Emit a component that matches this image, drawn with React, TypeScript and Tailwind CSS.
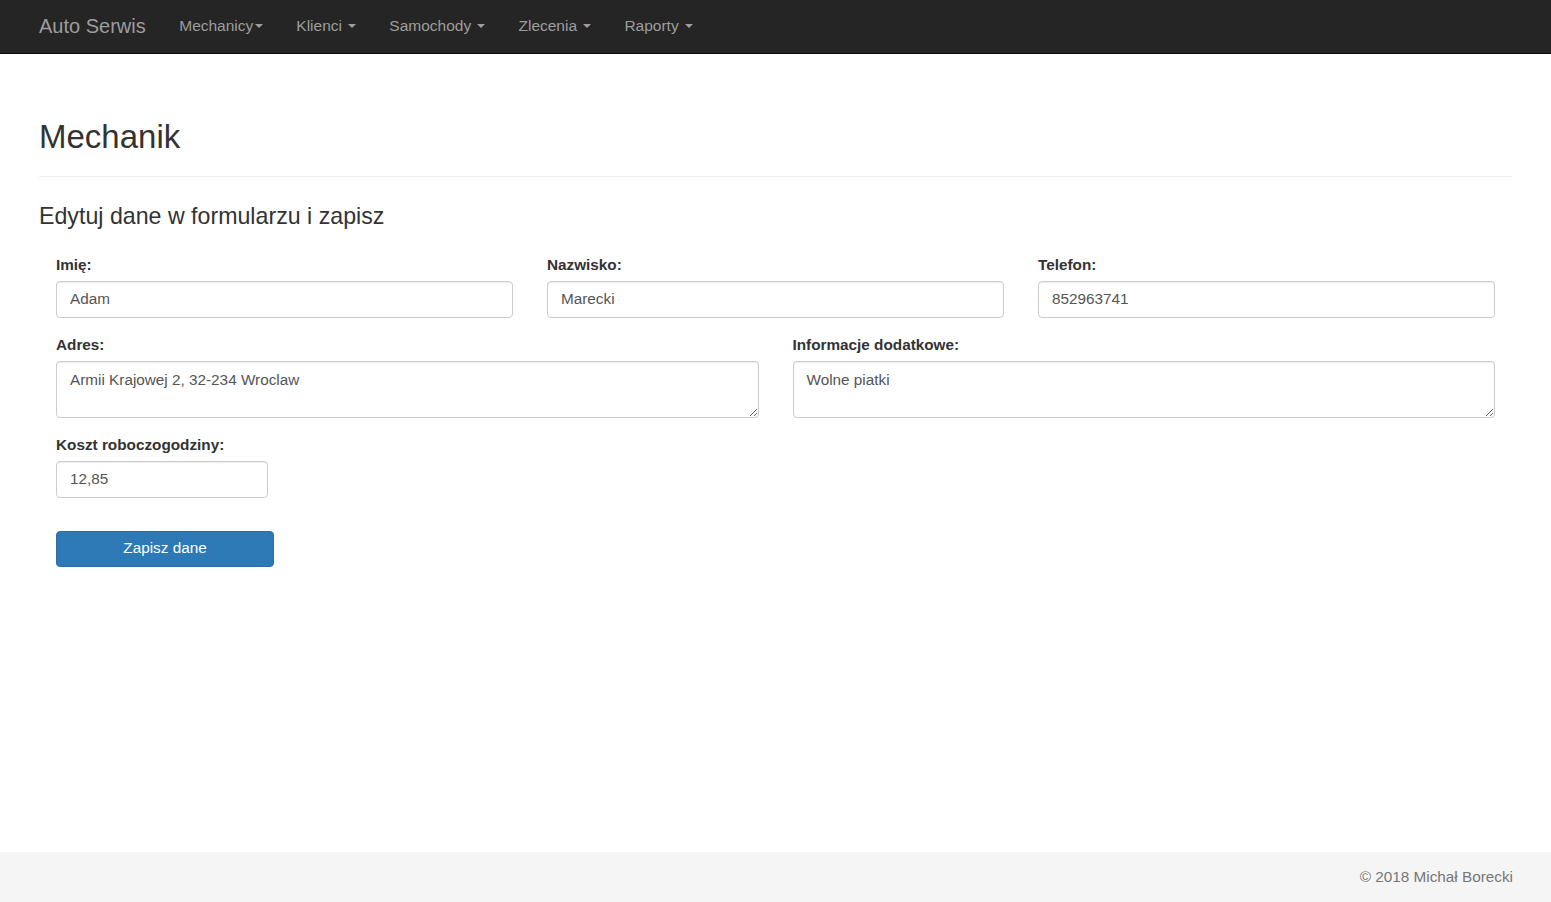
import React from 'react';

const navItems = [
    { label: 'Mechanicy', tight: true },
    { label: 'Klienci', tight: false },
    { label: 'Samochody', tight: false },
    { label: 'Zlecenia', tight: false },
    { label: 'Raporty', tight: false },
];

const Caret = () => (
    <span className="inline-block w-0 h-0 ml-[2px] align-middle border-t-[4px] border-t-[#9d9d9d] border-x-[4px] border-x-transparent" />
);

const Field = ({ label, children }: { label: string; children: React.ReactNode }) => (
    <div className="flex flex-col mb-[16px]">
        <label className="font-bold text-[#333] leading-[21px] mb-[6px]">{label}</label>
        {children}
    </div>
);

const inputCls =
    'h-[37px] w-full px-[13px] border border-[#ccc] rounded-[4px] bg-white text-[#555] text-[15.3px] outline-none shadow-[inset_0_1px_1px_rgba(0,0,0,0.075)]';

const areaCls =
    'block w-full h-[57px] px-[13px] pt-[7px] leading-[21px] border border-[#ccc] rounded-[4px] bg-white text-[#555] text-[15.3px] outline-none shadow-[inset_0_1px_1px_rgba(0,0,0,0.075)]';

const App: React.FC = () => {
    return (
        <div className="min-h-screen flex flex-col bg-white text-[15.3px] text-[#333] font-['Liberation_Sans',Arial,sans-serif]">
            {/* Navbar */}
            <nav className="h-[54px] bg-[#252525] border-b border-[#080808] flex items-center pl-[22px] pb-[2px]">
                <a className="px-[17px] text-[20px] text-[#9d9d9d] leading-none">Auto Serwis</a>
                {navItems.map((item) => (
                    <a key={item.label} className="px-[16.5px] text-[15.5px] text-[#9d9d9d] leading-none flex items-center">
                        {item.label}
                        {!item.tight && <span>&nbsp;</span>}
                        <Caret />
                    </a>
                ))}
            </nav>

            <main className="flex-1 px-[39px]">
                <h1 className="mt-[65px] text-[33px] leading-[1.1] text-[#333]">Mechanik</h1>
                <hr className="mt-[21px] border-t border-[#eee]" />
                <h3 className="mt-[27px] text-[23.2px] leading-[1.1] text-[#333]">Edytuj dane w formularzu i zapisz</h3>

                <form className="mt-[24px] px-[17px]">
                    <div className="grid grid-cols-3 gap-x-[34px]">
                        <Field label="Imię:">
                            <input className={inputCls} defaultValue="Adam" />
                        </Field>
                        <Field label="Nazwisko:">
                            <input className={inputCls} defaultValue="Marecki" />
                        </Field>
                        <Field label="Telefon:">
                            <input className={inputCls} defaultValue="852963741" />
                        </Field>
                    </div>

                    <div className="grid grid-cols-2 gap-x-[34px]">
                        <Field label="Adres:">
                            <textarea rows={2} className={areaCls} defaultValue="Armii Krajowej 2, 32-234 Wroclaw" />
                        </Field>
                        <Field label="Informacje dodatkowe:">
                            <textarea rows={2} className={areaCls} defaultValue="Wolne piatki" />
                        </Field>
                    </div>

                    <div className="w-[212px]">
                        <Field label="Koszt roboczogodziny:">
                            <input className={inputCls} defaultValue="12,85" />
                        </Field>
                    </div>

                    <button
                        type="button"
                        className="mt-[17px] w-[218px] h-[36px] bg-[#2c79b6] border border-[#2e6da4] rounded-[4px] text-white text-[15.3px]"
                    >
                        Zapisz dane
                    </button>
                </form>
            </main>

            {/* Footer */}
            <footer className="h-[50px] bg-[#f5f5f5] flex items-center justify-end pr-[38px] text-[#777] text-[15.3px]">
                © 2018 Michał Borecki
            </footer>
        </div>
    );
};

export default App;
